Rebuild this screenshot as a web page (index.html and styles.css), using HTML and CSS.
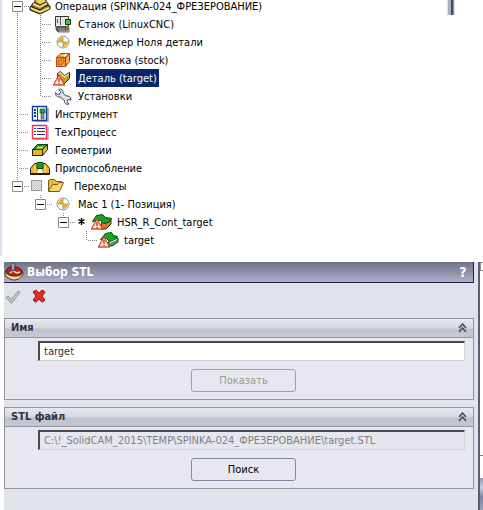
FILE: index.html
```
<!DOCTYPE html>
<html lang="ru">
<head>
<meta charset="utf-8">
<title>Выбор STL</title>
<link rel="stylesheet" href="styles.css">
</head>
<body>
<svg class="defs" aria-hidden="true">
  <symbol id="g-line" viewBox="0 0 23 18"><path class="dots" d="M11.5 0V18"/></symbol>
  <symbol id="g-tee" viewBox="0 0 23 18"><path class="dots" d="M11.5 0V18M13 9.5H23"/></symbol>
  <symbol id="g-elbow" viewBox="0 0 23 18"><path class="dots" d="M11.5 0V10M13 9.5H23"/></symbol>
  <symbol id="g-open" viewBox="0 0 23 18"><path class="dots" d="M11.5 0V4M18 9.5H23"/><path d="M6.500 4.500h10v10h-10z" fill="#fff" stroke="#8a8a8a"/><path d="M8 9.500h7" stroke="#000"/></symbol>
  <symbol id="g-root" viewBox="0 0 23 18"><path class="dots" d="M11.5 16V18M18 9.5H23"/><path d="M6.500 4.500h10v10h-10z" fill="#fff" stroke="#8a8a8a"/><path d="M8 9.500h7" stroke="#000"/></symbol>
  <symbol id="i-zero" viewBox="0 0 24 18"><circle cx="11" cy="9" r="6" fill="#fff" stroke="#8c8f98"/><path d="M11 9V4a5 5 0 0 0-5 5zM11 9v5a5 5 0 0 0 5-5z" fill="#e9b126"/><path d="M11 4v10M6 9h10" stroke="#a98a48" stroke-width=".7"/></symbol>
  <symbol id="i-warn" viewBox="0 0 12 12"><path d="M6 1L11.500 11H.5z" fill="#ffe9dc" stroke="#d54a31" stroke-width="1.300"/><path d="M6 4v4M6 9v1" stroke="#c32216" stroke-width="1.300"/></symbol>
</svg>

<main class="page">
  <section class="tree-pane">
    <ul class="tree" aria-label="Операция">
      <li class="row">
        <svg class="guide"><use href="#g-root"/></svg>
        <svg class="icon" viewBox="0 0 24 18"><path d="M1 10l9-5 11 4v3l-10 5L1 13z" fill="#b78b27" stroke="#161008"/><path d="M2 11l9 4 9-4" fill="none" stroke="#f8e9a0" stroke-width="1.500"/><path d="M3 7l7-4 9 3v2l-8 5-8-3z" fill="#a47a22" stroke="#1b1409"/><path d="M4 7l7 3 7-4" fill="none" stroke="#f7e69a" stroke-width="1.500"/><path d="M6 3l5-3 6 3v2l-6 3-5-3z" fill="#e8cd62" stroke="#302006"/></svg>
        <span class="label">Операция (SPINKA-024_ФРЕЗЕРОВАНИЕ)</span>
      </li>
      <li class="row">
        <svg class="guide"><use href="#g-line"/></svg><svg class="guide"><use href="#g-tee"/></svg>
        <svg class="icon" viewBox="0 0 24 18"><path d="M3.500 1.500h13v10h-13z" fill="#e5e5ea" stroke="#343438"/><path d="M4 12h13v5H6l-2-2z" fill="#46464a" stroke="#77777b"/><path d="M8.500 2v8M5.500 4v4" stroke="#55555b"/><path d="M13.500 4.500h5v5h-5z" fill="#27d43a" stroke="#16291a"/><path d="M6 14h7M7 16h10" stroke="#c4c2b4"/><path d="M14 12h3v3h-3z" fill="#8d7a30"/></svg>
        <span class="label">Станок (LinuxCNC)</span>
      </li>
      <li class="row">
        <svg class="guide"><use href="#g-line"/></svg><svg class="guide"><use href="#g-tee"/></svg>
        <svg class="icon"><use href="#i-zero"/></svg>
        <span class="label">Менеджер Ноля детали</span>
      </li>
      <li class="row">
        <svg class="guide"><use href="#g-line"/></svg><svg class="guide"><use href="#g-tee"/></svg>
        <svg class="icon" viewBox="0 0 24 18"><path d="M4.500 6.500l4-4h9v8l-4 5h-9z" fill="#f6b64c" stroke="#c33a1c"/><path d="M4.500 6.500h9l4-4M13.500 6.500v9" fill="none" stroke="#c33a1c" stroke-width="1.300"/><path d="M6 9h3V7h3v4l-2 3H6z" fill="#e38b28" stroke="#b3531b" stroke-width=".8"/><path d="M11 5l2-2h3l-3 3z" fill="#fff4d9"/></svg>
        <span class="label">Заготовка (stock)</span>
      </li>
      <li class="row">
        <svg class="guide"><use href="#g-line"/></svg><svg class="guide"><use href="#g-tee"/></svg>
        <svg class="icon" viewBox="0 0 24 18"><path d="M5.500 4.500l3-2 4 4 5-3v6l-6 6H6z" fill="#c9982a" stroke="#3c2a0a"/><path d="M6.500 5l2-1 4 4 4-3" fill="none" stroke="#f7dc78" stroke-width="1.500"/><use href="#i-warn" x="1" y="5" width="12" height="12"/></svg>
        <span class="label selected">Деталь (target)</span>
      </li>
      <li class="row">
        <svg class="guide"><use href="#g-line"/></svg><svg class="guide"><use href="#g-elbow"/></svg>
        <svg class="icon" viewBox="0 0 24 18"><path d="M6.500 2.500l2 2-.5 2.500-2.500.5-2-2c-.5 3 2 5 4.500 4.500l4.500 3.500c-.5 3 2 4.500 4.500 3.500l-2-2.500 1-2 3 .5c0-3-2-4.500-5-4L11 6c.5-3-2-4.500-4.500-3.500z" fill="#dbe3ea" stroke="#3d4955"/></svg>
        <span class="label">Установки</span>
      </li>
      <li class="row">
        <svg class="guide"><use href="#g-tee"/></svg>
        <svg class="icon" viewBox="0 0 24 18"><path d="M5 16h14V3" fill="none" stroke="#a5adc8" stroke-width="2"/><path d="M3.500 1.500h14v14h-14z" fill="#fff" stroke="#173b9b" stroke-width="1.400"/><path d="M8.500 2v13" stroke="#173b9b"/><path d="M6 4v2M6 7v2M6 10v2" stroke="#173b9b" stroke-width="2"/><path d="M11 4h5v4h-5z" fill="#18a545" stroke="#16602b" stroke-width=".7"/><path d="M12 8h3v6h-3z" fill="#829b89" stroke="#38453b" stroke-width=".6"/></svg>
        <span class="label">Инструмент</span>
      </li>
      <li class="row">
        <svg class="guide"><use href="#g-tee"/></svg>
        <svg class="icon" viewBox="0 0 24 18"><path d="M5 16h14V4" fill="none" stroke="#c9b8c5" stroke-width="2"/><path d="M3.500 2.500h14v13h-14z" fill="#fff" stroke="#e33848" stroke-width="1.400"/><path d="M5 5.500h2M8 5.500h8M5 8.500h2M8 8.500h8M5 11.500h2M8 11.500h8" stroke="#2e2a9b"/></svg>
        <span class="label">ТехПроцесс</span>
      </li>
      <li class="row">
        <svg class="guide"><use href="#g-tee"/></svg>
        <svg class="icon" viewBox="0 0 24 18"><path d="M3.500 8.500l5-5h10v5l-5 6h-10z" fill="#e8b32b" stroke="#2b210a"/><path d="M3.500 8.500l5-5h10l-5 5z" fill="#17a31d" stroke="#0b450f"/><path d="M7 7.500l2-2h6l-2 2z" fill="#edd25b"/><path d="M13.500 8.500v6" stroke="#2b210a"/></svg>
        <span class="label">Геометрии</span>
      </li>
      <li class="row">
        <svg class="guide"><use href="#g-tee"/></svg>
        <svg class="icon" viewBox="0 0 24 18"><path d="M1.500 15.500v-6l4-5h3v7h5v-7h3l4 5v6z" fill="#e7b62e" stroke="#251b08"/><path d="M8 3.500h6v6H8z" fill="#12a62a" stroke="#0c4d15"/><path d="M8.500 10h5v4h-5z" fill="#fff8df"/><path d="M6 6v7M16 6v7" stroke="#f9e68d"/><path d="M1 14.500h20" stroke="#251b08"/></svg>
        <span class="label">Приспособление</span>
      </li>
      <li class="row">
        <svg class="guide"><use href="#g-open"/></svg>
        <span class="check-slot"><input class="check" type="checkbox" checked disabled aria-label="Переходы"></span>
        <svg class="icon" viewBox="0 0 24 18"><path d="M.5 14.500v-11l2-1h4l2 2h5v3" fill="#e9bb3d" stroke="#785a18"/><path d="M.5 14.500l4-7h5l2-2h4l-4 9z" fill="#fbd865" stroke="#785a18"/></svg>
        <span class="label">Переходы</span>
      </li>
      <li class="row">
        <span class="guide"></span><svg class="guide"><use href="#g-open"/></svg>
        <svg class="icon"><use href="#i-zero"/></svg>
        <span class="label">Мас 1 (1- Позиция)</span>
      </li>
      <li class="row">
        <span class="guide"></span><span class="guide"></span><svg class="guide"><use href="#g-open"/></svg>
        <svg class="star" viewBox="0 0 16 18"><path d="M6.500 5v7M3.500 6.500l6 4M9.500 6.500l-6 4" stroke="#000" stroke-width="1.400"/></svg>
        <svg class="icon" viewBox="0 0 24 18"><path d="M11 9l9-3v5l-5 5H9z" fill="#d47b2b" stroke="#402208"/><path d="M1.500 8.500l4-6 6-1 3 3 6 1-3 4-5 1-3-3z" fill="#13a622" stroke="#07470e"/><use href="#i-warn" x="0" y="5" width="12" height="12"/></svg>
        <span class="label">HSR_R_Cont_target</span>
      </li>
      <li class="row">
        <span class="guide"></span><span class="guide"></span><span class="guide"></span><svg class="guide"><use href="#g-elbow"/></svg>
        <svg class="icon" viewBox="0 0 24 18"><path d="M10 11l10-4v4l-6 4H8z" fill="#4e9c58" stroke="#07470e"/><path d="M2.500 8.500l5-6 6-1 2 3 4 1-3 4-5 1-3-3z" fill="#13a622" stroke="#07470e"/><path d="M12 11.500l7-3" stroke="#fff"/><use href="#i-warn" x="0" y="5" width="12" height="12"/></svg>
        <span class="label">target</span>
      </li>
    </ul>
    <div class="splitter"></div>
  </section>

  <div class="workspace">
    <form class="dialog">
      <header class="titlebar">
        <svg class="title-icon" viewBox="0 0 20 20"><path d="M1 11c0-4 6-6 10-5s9 3 8 6-5 6-9 6-9-3-9-7z" fill="#e6d49b" stroke="#4c3520"/><path d="M2 9c1-4 6-5 10-4s7 3 6 6-5 3-8 3-9-2-8-5z" fill="#ad2420" stroke="#591411"/><path d="M6 11l3-2 4 2 3-1" fill="none" stroke="#f3dfaa" stroke-width="1.500"/><path d="M7 1h4v3l-1 5H8L7 5z" fill="#9b9baa" stroke="#474755"/></svg>
        <h1 class="title">Выбор STL</h1>
        <button class="help" type="button" aria-label="Справка">?</button>
      </header>
      <div class="actions">
        <button class="action" type="button" aria-label="ОК" disabled><svg viewBox="0 0 16 16"><path d="M1 8.500l2-1.500 3 3.500L13 2l2 1-8 11H6z" fill="#c3c6ca" stroke="#92969b"/></svg></button>
        <button class="action" type="button" aria-label="Отмена"><svg viewBox="0 0 16 16"><path d="M3 4l3-2 3 3 4-4 2 3-4 4 3 4-3 2-3-3-3 4-3-3 4-4z" fill="#8c8f98" opacity=".5"/><path d="M2 3l3-2 3 3 3-3 3 2-3 4 3 4-3 2-3-3-3 3-3-2 3-4z" fill="#e22c30" stroke="#a5141b"/></svg></button>
      </div>
      <section class="group">
        <h2 class="group-head"><label for="name">Имя</label><svg class="chevrons" viewBox="0 0 9 10"><path d="M1 5l3.500-4L8 5M1 9l3.500-4L8 9" /></svg></h2>
        <div class="group-body">
          <input class="field" id="name" type="text" value="target">
          <button class="button" type="button" disabled>Показать</button>
        </div>
      </section>
      <section class="group">
        <h2 class="group-head"><label for="file">STL файл</label><svg class="chevrons" viewBox="0 0 9 10"><path d="M1 5l3.500-4L8 5M1 9l3.500-4L8 9" /></svg></h2>
        <div class="group-body">
          <input class="field" id="file" type="text" value="C:\!_SolidCAM_2015\TEMP\SPINKA-024_ФРЕЗЕРОВАНИЕ\target.STL" disabled>
          <button class="button" type="button">Поиск</button>
        </div>
      </section>
    </form>
    <div class="viewport">
      <span class="corner"></span>
      <span class="edge"></span>
      <span class="taskbar"></span>
    </div>
  </div>
</main>
</body>
</html>
```

FILE: styles.css
```
* { box-sizing: border-box; }

body {
  margin: 0;
  background: #fff;
  color: #000;
  font: 11px/18px Tahoma, "DejaVu Sans Condensed", "DejaVu Sans", sans-serif;
}

button, input { font: inherit; }

.defs { position: absolute; width: 0; height: 0; }

.dots {
  fill: none;
  stroke: #868686;
  stroke-dasharray: 1 1;
}

.page {
  display: flex;
  flex-direction: column;
  min-height: 100vh;
  overflow: hidden;
}

/* Operation tree */
.tree-pane {
  display: flex;
  justify-content: space-between;
  margin-bottom: 6px;
  padding-bottom: 7px;
  border-left: 2px solid #dfe0ef;
}

.tree {
  margin: -3px 0 0;
  padding: 0 0 0 4px;
  list-style: none;
}

.row {
  display: flex;
  height: 18px;
}

.guide { flex: none; width: 23px; height: 18px; }
.icon { flex: none; width: 24px; height: 18px; }
.star { flex: none; width: 16px; height: 18px; }

.label {
  padding: 1px 2px 0;
  white-space: nowrap;
}

.selected {
  background: #0a246a;
  color: #fff;
}

.check-slot { flex: none; width: 19px; padding: 3px 2px; }

.check {
  appearance: none;
  display: block;
  width: 11px;
  height: 11px;
  margin: 0;
  border: 1px solid #9a9a9a;
  background: repeating-conic-gradient(#c6c6c6 0 25%, #e6e6e6 0 50%) 0 0 / 2px 2px;
}

.splitter {
  width: 8px;
  height: 15px;
  margin-right: 28px;
  background: linear-gradient(90deg, #dfe2f0 0 1px, #a9afc6 1px 4px, #454a5c 4px 6px, #8c90a2 6px 7px, #e4e5ec 7px);
}

/* Dialog */
.workspace {
  display: flex;
  flex: 1;
  padding-left: 4px;
}

.dialog {
  flex: 1;
  min-width: 0;
  padding-right: 4px;
  border-right: 2px solid #5c5f70;
  background: #e0e3ea;
}

.titlebar {
  display: flex;
  align-items: center;
  height: 21px;
  border-right: 1px solid #1e1e4c;
  border-bottom: 1px solid #1e1e4c;
  background: linear-gradient(#717289, #8d8ea7 50%, #b0b1c6);
  color: #fff;
}

.title-icon { width: 20px; height: 20px; }

.title {
  flex: 1;
  margin: 0;
  padding-left: 3px;
  font-size: 12px;
  font-weight: bold;
}

.help {
  width: 16px;
  margin-right: 2px;
  padding: 0;
  border: 0;
  background: none;
  color: #fff;
  font-size: 14px;
  font-weight: bold;
}

.actions {
  display: flex;
  gap: 10px;
  height: 35px;
  padding: 6px 1px;
}

.action {
  width: 16px;
  height: 16px;
  padding: 0;
  border: 0;
  background: none;
}

.action svg { display: block; }

.group {
  margin-bottom: 7px;
  border: 1px solid #9193a2;
  background: #e7e8ef;
}

.group-head {
  display: flex;
  align-items: center;
  justify-content: space-between;
  height: 19px;
  margin: 0;
  padding: 0 6px;
  border-bottom: 1px solid #9193a2;
  background: linear-gradient(#e6e9ed, #d5d9df 50%, #bec3ce 55%, #c3c8d2);
  color: #2f3344;
  font-size: 11px;
  font-weight: bold;
}

.chevrons {
  width: 9px;
  height: 10px;
  fill: none;
  stroke: #45485a;
  stroke-width: 1.5;
}

.group-body {
  display: flex;
  flex-direction: column;
  align-items: center;
  gap: 8px;
  padding: 3px 8px 7px 33px;
}

.field {
  width: 100%;
  height: 20px;
  padding: 0 4px;
  border: 1px solid;
  border-width: 2px 1px 1px 2px;
  border-color: #4a4a4e #d3d2cf #d3d2cf #4a4a4e;
  background: #fff;
  color: #333;
}

.field:disabled {
  background: #e6e7ee;
  color: #808080;
}

.button {
  width: 105px;
  height: 23px;
  margin-right: 16px;
  padding: 0;
  border: 1px solid #8587a0;
  border-radius: 3px;
  background: #e7e8ef;
  color: #000;
}

.button:disabled {
  border-color: #a0a09d;
  color: #96968f;
}

/* Sliver of the window behind the dialog */
.viewport {
  display: flex;
  flex-direction: column;
  justify-content: space-between;
  width: 3px;
  background: #fff;
}

.corner { height: 9px; border: 1px solid #8c8c91; border-right: 0; }
.edge { height: 1px; margin-top: auto; margin-bottom: 22px; background: #777; }
.taskbar { height: 32px; background: linear-gradient(#9297b4, #c9cde0 30%, #7c82a2 60%, #9da3bb); }
```
